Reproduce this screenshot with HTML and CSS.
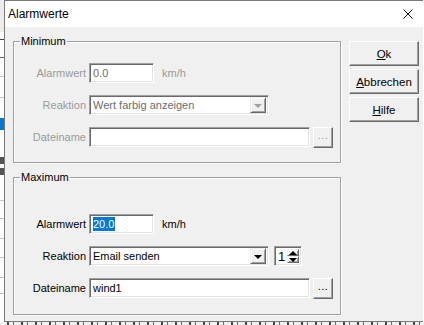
FILE: index.html
```html
<!doctype html>
<html lang="de">
  <head>
    <title>Alarmwerte</title>
    <meta name="viewport" content="width=device-width, initial-scale=1" />
    <link rel="stylesheet" href="styles.css">
  </head>
  <body>
    <div class="screen">
      <div class="top">
        <div class="behind"></div>
        <div class="dialog">
          <div class="titlebar">
            <span class="title">Alarmwerte</span>
            <svg class="close" width="10" height="10" viewBox="0 0 10 10">
              <path d="M0.5 0.5 L9.5 9.5 M9.5 0.5 L0.5 9.5" stroke="#111" stroke-width="1" fill="none" />
            </svg>
          </div>
          <div class="client">
            <div class="groups">
              <div class="group minGroup disabled">
                <span class="legend">Minimum</span>
                <div class="row">
                  <span class="lbl">Alarmwert</span>
                  <div class="edit numEdit">0.0</div>
                  <span class="unit">km/h</span>
                </div>
                <div class="row">
                  <span class="lbl">Reaktion</span>
                  <div class="edit combo">
                    <span class="comboText">Wert farbig anzeigen</span>
                    <span class="dropBtn"><i class="arrowDown"></i></span>
                  </div>
                </div>
                <div class="row">
                  <span class="lbl">Dateiname</span>
                  <div class="edit fileEdit"></div>
                  <div class="btn dots"><span>...</span></div>
                </div>
              </div>
              <div class="group maxGroup">
                <span class="legend">Maximum</span>
                <div class="row">
                  <span class="lbl">Alarmwert</span>
                  <div class="edit numEdit"><span class="sel">20.0</span></div>
                  <span class="unit">km/h</span>
                </div>
                <div class="row">
                  <span class="lbl">Reaktion</span>
                  <div class="edit combo">
                    <span class="comboText">Email senden</span>
                    <span class="dropBtn"><i class="arrowDown"></i></span>
                  </div>
                  <div class="edit spin">
                    <span class="spinText">1</span>
                    <span class="spinBtns">
                      <span class="spinBtn"><i class="arrowUp"></i></span>
                      <span class="spinBtn"><i class="arrowDown small"></i></span>
                    </span>
                  </div>
                </div>
                <div class="row">
                  <span class="lbl">Dateiname</span>
                  <div class="edit fileEdit">wind1</div>
                  <div class="btn dots"><span>...</span></div>
                </div>
              </div>
            </div>
            <div class="buttons">
              <div class="btn cmd"><u>O</u>k</div>
              <div class="btn cmd"><u>A</u>bbrechen</div>
              <div class="btn cmd"><u>H</u>ilfe</div>
            </div>
          </div>
        </div>
      </div>
      <div class="under"></div>
    </div>
  </body>
</html>
```

FILE: styles.css
```css
body {
  margin: 0;
  width: 424px;
  height: 325px;
  overflow: hidden;
  background-color: #fff;
  font: 11px "Liberation Sans", Arial, sans-serif;
  color: #000;
}
.screen {
  display: flex;
  flex-direction: column;
}
.top {
  display: flex;
  height: 322px;
}
.behind {
  width: 4px;
  flex: none;
  background: linear-gradient(
    to bottom,
    #ececec 0 32px,
    #fff 32px 39px,
    #444 39px 40px,
    #fff 40px 57px,
    #666 57px 58px,
    #fff 58px 76px,
    #c8c8c8 76px 77px,
    #fff 77px 97px,
    #c8c8c8 97px 98px,
    #fff 98px 118px,
    #0078d7 118px 130px,
    #fff 130px 157px,
    #555 157px 164px,
    #fff 164px 168px,
    #555 168px 175px,
    #fff 175px 200px,
    #c8c8c8 200px 201px,
    #fff 201px 218px,
    #c8c8c8 218px 219px,
    #fff 219px 238px,
    #c8c8c8 238px 239px,
    #fff 239px 257px,
    #c8c8c8 257px 258px,
    #fff 258px 277px,
    #c8c8c8 277px 278px,
    #fff 278px 293px,
    #c8c8c8 293px 294px,
    #fff 294px
  );
}
.dialog {
  flex: none;
  width: 419px;
  height: 322px;
  box-sizing: border-box;
  border: 1px solid #7a7a7a;
  border-right: none;
  background-color: #f0f0f0;
  display: flex;
  flex-direction: column;
}
.titlebar {
  height: 26px;
  flex: none;
  background-color: #fff;
  display: flex;
  align-items: center;
  justify-content: space-between;
  padding-left: 3px;
}
.title {
  font-size: 12px;
}
.close {
  margin-right: 10px;
  margin-top: -1px;
}
.client {
  display: flex;
  padding: 14px 0 0 8px;
}
.groups {
  display: flex;
  flex-direction: column;
  gap: 14px;
  width: 328px;
}
.group {
  position: relative;
  box-sizing: border-box;
  border: 1px solid #a0a0a0;
  box-shadow: inset 1px 1px 0 #fff, 1px 1px 0 #fff;
  display: flex;
  flex-direction: column;
  gap: 12px;
}
.minGroup {
  height: 122px;
  padding-top: 21px;
}
.maxGroup {
  height: 138px;
  padding-top: 36px;
}
.legend {
  position: absolute;
  top: -7px;
  left: 6px;
  padding: 0 1px;
  background-color: #f0f0f0;
  line-height: 13px;
}
.row {
  display: flex;
  align-items: center;
  height: 20px;
}
.lbl {
  width: 72px;
  text-align: right;
  margin-right: 3px;
  flex: none;
}
.edit {
  box-sizing: border-box;
  height: 20px;
  background-color: #fff;
  border: 1px solid;
  border-color: #a0a0a0 #fff #fff #a0a0a0;
  box-shadow: inset 1px 1px 0 #696969, inset -1px -1px 0 #e3e3e3;
  padding: 0 2px 0 3px;
  line-height: 18px;
  white-space: nowrap;
  flex: none;
}
.numEdit {
  width: 65px;
}
.unit {
  margin-left: 8px;
}
.combo {
  width: 180px;
  display: flex;
  align-items: center;
  justify-content: space-between;
  padding: 2px 2px 2px 3px;
}
.comboText {
  line-height: 14px;
}
.dropBtn,
.spinBtn {
  box-sizing: border-box;
  display: flex;
  align-items: center;
  justify-content: center;
  background-color: #f0f0f0;
  border: 1px solid;
  border-color: #f0f0f0 #696969 #696969 #f0f0f0;
  box-shadow: inset 1px 1px 0 #fff, inset -1px -1px 0 #a0a0a0;
}
.dropBtn {
  width: 16px;
  height: 16px;
}
.arrowDown {
  width: 0;
  height: 0;
  border-left: 4px solid transparent;
  border-right: 4px solid transparent;
  border-top: 4px solid #000;
  margin-top: 1px;
}
.arrowUp {
  width: 0;
  height: 0;
  border-left: 4px solid transparent;
  border-right: 4px solid transparent;
  border-bottom: 4px solid #000;
}
.arrowDown.small {
  margin-top: 0;
}
.spin {
  width: 28px;
  margin-left: 5px;
  display: flex;
  justify-content: space-between;
  padding: 2px 2px 2px 3px;
}
.spinText {
  font-size: 13px;
  line-height: 15px;
}
.spinBtns {
  display: flex;
  flex-direction: column;
  width: 12px;
}
.spinBtn {
  height: 8px;
}
.fileEdit {
  width: 221px;
}
.btn {
  box-sizing: border-box;
  background-color: #f0f0f0;
  border: 1px solid;
  border-color: #fff #696969 #696969 #fff;
  box-shadow: inset -1px -1px 0 #a0a0a0;
  display: flex;
  align-items: center;
  justify-content: center;
  flex: none;
}
.dots {
  width: 20px;
  height: 21px;
  margin-left: 3px;
  margin-top: 1px;
  letter-spacing: 0.5px;
}
.dots span {
  display: block;
  line-height: 11px;
  height: 11px;
  margin-top: -5px;
}
.buttons {
  display: flex;
  flex-direction: column;
  gap: 3px;
  margin-left: 8px;
  width: 70px;
}
.cmd {
  height: 25px;
  font-size: 11.5px;
}
.disabled .lbl,
.disabled .unit {
  color: #9a9a9a;
}
.disabled .edit {
  color: #6d6d6d;
}
.disabled .arrowDown {
  border-top-color: #a0a0a0;
}
.disabled .dots {
  color: #a0a0a0;
}
.sel {
  background-color: #0078d7;
  color: #fff;
  padding: 1px 1px 1px 0;
}
.under {
  height: 3px;
  background: repeating-linear-gradient(
    to right,
    #f0f0f0 0 7px,
    #444 7px 9px,
    #f0f0f0 9px 13px,
    #666 13px 14px
  );
}
```
